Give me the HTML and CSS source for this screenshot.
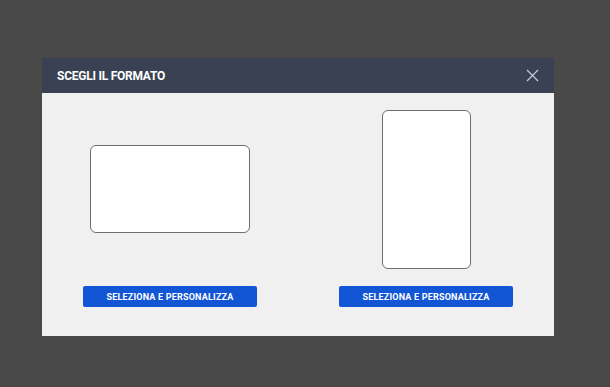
FILE: index.html
```html
<!DOCTYPE html>
<html lang="it">
<head>
    <meta charset="UTF-8">
    <meta name="viewport" content="width=device-width, initial-scale=1.0">
    <title>Scegli il formato</title>
<link rel="stylesheet" href="styles.css">
</head>
<body>
    <div class="modal">
        <div class="modal-header">
            <span class="modal-title">SCEGLI IL FORMATO</span>
            <span class="modal-close">
                <svg width="13" height="13" viewBox="0 0 13 13">
                    <path d="M1 1 L12 12 M12 1 L1 12" stroke="#c4c8d0" stroke-width="1.3" fill="none"/>
                </svg>
            </span>
        </div>
        <div class="modal-body">
            <div class="format">
                <div class="preview">
                    <div class="frame landscape"></div>
                </div>
                <button class="btn">SELEZIONA E PERSONALIZZA</button>
            </div>
            <div class="format">
                <div class="preview">
                    <div class="frame portrait"></div>
                </div>
                <button class="btn">SELEZIONA E PERSONALIZZA</button>
            </div>
        </div>
    </div>
</body>
</html>
```

FILE: styles.css
```css
body {
    margin: 0;
    background-color: #494949;
    font-family: Roboto, "Liberation Sans", sans-serif;
    height: 387px;
    padding-top: 58px;
    box-sizing: border-box;
}
.modal {
    width: 512px;
    margin-left: 42px;
    background-color: #f0f0f0;
}
.modal-header {
    display: flex;
    align-items: center;
    justify-content: space-between;
    height: 35px;
    padding: 0 15px;
    background-color: #3a4152;
}
.modal-title {
    color: #ffffff;
    font-size: 12px;
    font-weight: 700;
    letter-spacing: -0.25px;
}
.modal-close {
    display: flex;
    cursor: pointer;
}
.modal-body {
    display: grid;
    grid-template-columns: 1fr 1fr;
    padding: 16px 0 29px;
}
.format {
    display: flex;
    flex-direction: column;
    align-items: center;
}
.preview {
    display: flex;
    align-items: center;
    justify-content: center;
    height: 160px;
    margin-bottom: 17px;
}
.frame {
    background-color: #ffffff;
    border: 1.5px solid #6e6e6e;
    border-radius: 6px;
    box-sizing: border-box;
}
.frame.landscape {
    width: 160px;
    height: 88px;
}
.frame.portrait {
    width: 89px;
    height: 159px;
}
.btn {
    width: 174px;
    height: 21px;
    border: none;
    border-radius: 2px;
    background-color: #1256d6;
    color: #ffffff;
    font-family: Roboto, "Liberation Sans", sans-serif;
    font-size: 9px;
    font-weight: 700;
    letter-spacing: 0.2px;
    cursor: pointer;
}
```
